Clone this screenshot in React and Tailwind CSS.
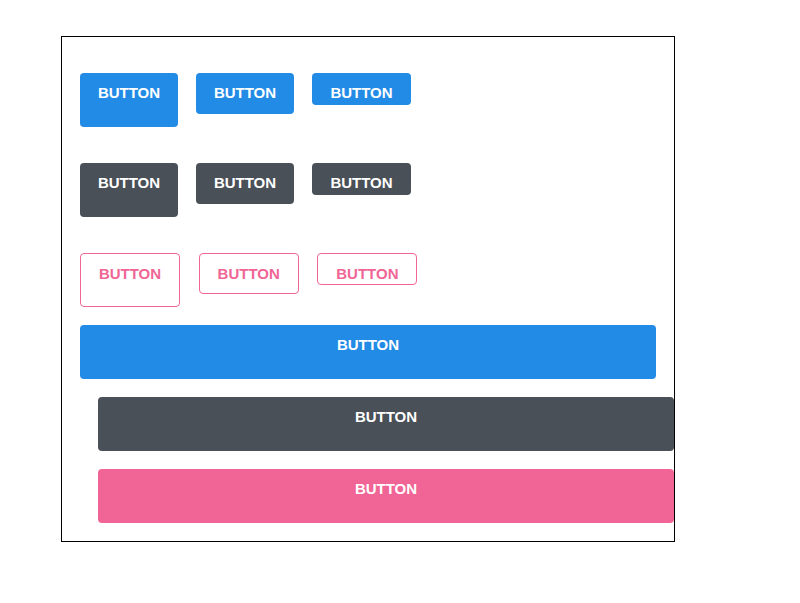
import React from "react";

const font = { fontFamily: '"Liberation Sans", Arial, sans-serif' };

function Btn({ className = "", children = "BUTTON" }) {
  return (
    <div
      className={`flex justify-center rounded-[4px] pt-[11px] text-[15px] leading-[17px] font-bold shrink-0 ${className}`}
    >
      {children}
    </div>
  );
}

export default function App() {
  return (
    <div className="w-[800px] h-[603px] bg-white" style={font}>
      <div className="pt-[36px] pl-[61px]">
        <div className="w-[614px] h-[506px] border border-black pl-[18px] pt-[36px] flex flex-col">
          <div className="flex gap-[18px] items-start">
            <Btn className="w-[98px] h-[54px] bg-[#228be6] text-white" />
            <Btn className="w-[98px] h-[41px] bg-[#228be6] text-white" />
            <Btn className="w-[99px] h-[32px] bg-[#228be6] text-white" />
          </div>
          <div className="flex gap-[18px] items-start mt-[36px]">
            <Btn className="w-[98px] h-[54px] bg-[#495057] text-white" />
            <Btn className="w-[98px] h-[41px] bg-[#495057] text-white" />
            <Btn className="w-[99px] h-[32px] bg-[#495057] text-white" />
          </div>
          <div className="flex gap-[18.7px] items-start mt-[36px]">
            <Btn className="w-[100px] h-[54px] border border-[#f06595] text-[#f06595] pt-[10px]" />
            <Btn className="w-[100px] h-[41px] border border-[#f06595] text-[#f06595] pt-[10px]" />
            <Btn className="w-[100px] h-[32px] border border-[#f06595] text-[#f06595] pt-[10px]" />
          </div>
          <Btn className="w-[576px] h-[54px] bg-[#228be6] text-white mt-[18px]" />
          <Btn className="w-[576px] h-[54px] bg-[#495057] text-white mt-[18px] ml-[18px]" />
          <Btn className="w-[576px] h-[54px] bg-[#f06595] text-white mt-[18px] ml-[18px]" />
        </div>
      </div>
    </div>
  );
}
